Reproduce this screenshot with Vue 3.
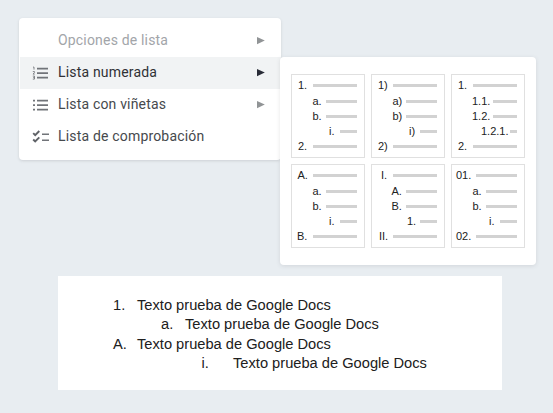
<script setup>
const items = [
  { text: 'Opciones de lista', arrow: true, state: 'muted' },
  { text: 'Lista numerada', arrow: true, icon: 'numbers', state: 'active' },
  { text: 'Lista con viñetas', arrow: true, icon: 'bullets' },
  { text: 'Lista de comprobación', icon: 'checks' },
]

// Each line: [label, label indent, bar width]
const presets = [
  [['1.', 6, 44], ['a.', 20.5, 31], ['b.', 20.5, 31], ['i.', 37, 17], ['2.', 6, 44]],
  [['1)', 6, 44], ['a)', 20.5, 31], ['b)', 20.5, 31], ['i)', 37, 17], ['2)', 6, 44]],
  [['1.', 6, 44], ['1.1.', 20, 24], ['1.2.', 20, 24], ['1.2.1.', 29, 7], ['2.', 6, 44]],
  [['A.', 5.5, 44], ['a.', 20.5, 31], ['b.', 20.5, 31], ['i.', 37, 17], ['B.', 5, 44]],
  [['I.', 9, 44], ['A.', 19.5, 31], ['B.', 19.5, 31], ['1.', 35, 17], ['II.', 7, 44]],
  [['01.', 4, 41], ['a.', 20.5, 31], ['b.', 20.5, 31], ['i.', 37, 17], ['02.', 4, 41]],
]

const lines = [
  { mark: '1.', level: 'one' },
  { mark: 'a.', level: 'two' },
  { mark: 'A.', level: 'one' },
  { mark: 'i.', level: 'three' },
]
</script>

<template>
  <main class="page">
    <nav class="menu">
      <div v-for="item in items" :key="item.text" class="item" :class="item.state">
        <span class="icon">
          <svg v-if="item.icon === 'numbers'" width="18" height="16" viewBox="0 0 18 16">
            <path d="M5 3.6h11M5 8.1h11M5 12.6h11" stroke="#717479" stroke-width="1.6" />
            <path d="M1 2.1h1v2.5M.8 6.6h1.7v1L1 9.1h1.7M.8 11.1h1.7v3H.8M1.2 12.6h1.3" fill="none" stroke="#77797e" stroke-width=".9" />
          </svg>
          <svg v-else-if="item.icon === 'bullets'" width="18" height="16" viewBox="0 0 18 16">
            <path d="M5 3.6h11M5 8.1h11M5 12.6h11" stroke="#717479" stroke-width="1.6" />
            <path d="M1 3.6h2M1 8.1h2M1 12.6h2" stroke="#717479" stroke-width="1.9" />
          </svg>
          <svg v-else-if="item.icon === 'checks'" width="18" height="16" viewBox="0 0 18 16">
            <path d="M1.2 4.2l2 2L7.3 2M1.2 10.5l2 2L7.3 8.3" fill="none" stroke="#5f6267" stroke-width="1.9" />
            <path d="M10 5.2h7M10 11.2h7" stroke="#717479" stroke-width="1.6" />
          </svg>
        </span>
        <span class="text">{{ item.text }}</span>
        <svg v-if="item.arrow" class="arrow" width="8" height="8" viewBox="0 0 8 8">
          <path d="M0 0L7.8 3.6L0 7.3z" fill="currentColor" />
        </svg>
      </div>
    </nav>

    <section class="submenu">
      <div v-for="(preset, p) in presets" :key="p" class="preset">
        <div v-for="(row, r) in preset" :key="r" class="row">
          <span class="label" :style="{ marginLeft: row[1] + 'px' }">{{ row[0] }}</span>
          <span class="bar" :style="{ width: row[2] + 'px' }"></span>
        </div>
      </div>
    </section>

    <article class="document">
      <div v-for="(line, i) in lines" :key="i" class="line" :class="line.level">
        <span class="mark">{{ line.mark }}</span>
        <span>Texto prueba de Google Docs</span>
      </div>
    </article>
  </main>
</template>

<style>
body {
  background: #e8edf1;
}
</style>

<style scoped>
.page {
  position: relative;
  box-sizing: border-box;
  width: 553px;
  height: 413px;
  padding: 18px 0 0 19px;
  overflow: hidden;
  background: #e8edf1;
}

.menu {
  box-sizing: border-box;
  width: 262px;
  height: 142px;
  padding: 7px 0 7px 1px;
  border-radius: 4px;
  background: #fff;
  box-shadow: 0 1px 3px rgba(60, 64, 67, 0.16);
  font-family: Roboto, sans-serif;
  font-size: 14px;
  letter-spacing: 0.18px;
  color: #46494d;
}

.item {
  display: flex;
  align-items: center;
  height: 32px;
  padding: 0 16px 0 12px;
}

.item.active {
  background: #f1f3f4;
  color: #303135;
}

.item.muted {
  color: #a2a5a9;
}

.icon {
  width: 26px;
  height: 16px;
}

.icon svg {
  display: block;
}

.text {
  padding-bottom: 2px;
}

.arrow {
  margin-left: auto;
  color: #919496;
}

.active .arrow {
  color: #282b36;
}

.submenu {
  position: absolute;
  left: 280px;
  top: 57px;
  box-sizing: border-box;
  display: grid;
  grid-template-columns: repeat(3, 74px);
  grid-auto-rows: 84px;
  gap: 6px;
  width: 256px;
  height: 208px;
  padding: 17px 11px;
  border-radius: 4px;
  background: #fff;
  box-shadow: 0 1px 4px rgba(60, 64, 67, 0.13);
  font-family: "Liberation Sans", Arial, sans-serif;
  font-size: 11px;
  color: #222;
}

.preset {
  box-sizing: border-box;
  padding: 3px 7px 0 0;
  border: 1px solid #e0e0e0;
}

.row {
  display: flex;
  align-items: center;
  height: 15px;
  line-height: 15px;
}

.row:first-child {
  margin-bottom: 1px;
}

.label {
  width: 0;
  white-space: nowrap;
}

.bar {
  height: 3px;
  margin-left: auto;
  background: #d2d2d2;
}

.document {
  box-sizing: border-box;
  width: 444px;
  height: 114px;
  margin: 116px 0 0 39px;
  padding: 20px 0 0 55px;
  background: #fff;
  font-family: "Liberation Sans", Arial, sans-serif;
  font-size: 14.67px;
  line-height: 19.4px;
  color: #202020;
}

.line {
  display: flex;
  white-space: nowrap;
}

.mark {
  width: 24px;
}

.two {
  padding-left: 48px;
}

.three {
  padding-left: 88.5px;
}

.three .mark {
  width: 31.5px;
}
</style>
